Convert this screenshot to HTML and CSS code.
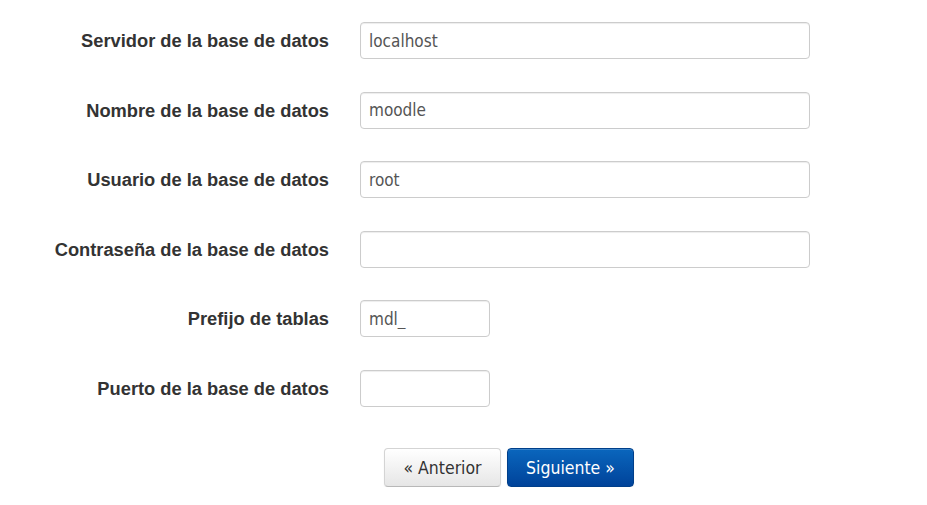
FILE: index.html
```html
<!DOCTYPE html>
<html lang="es">
<head>
<meta charset="utf-8">
<title>Configuración de la base de datos</title>
<link rel="stylesheet" href="styles.css">
</head>
<body>
<form class="form">
  <div class="row">
    <label class="label" for="dbhost">Servidor de la base de datos</label>
    <input class="field wide" id="dbhost" type="text" value="localhost">
  </div>
  <div class="row">
    <label class="label" for="dbname">Nombre de la base de datos</label>
    <input class="field wide" id="dbname" type="text" value="moodle">
  </div>
  <div class="row">
    <label class="label" for="dbuser">Usuario de la base de datos</label>
    <input class="field wide" id="dbuser" type="text" value="root">
  </div>
  <div class="row">
    <label class="label" for="dbpass">Contraseña de la base de datos</label>
    <input class="field wide" id="dbpass" type="text" value="">
  </div>
  <div class="row">
    <label class="label" for="prefix">Prefijo de tablas</label>
    <input class="field narrow" id="prefix" type="text" value="mdl_">
  </div>
  <div class="row">
    <label class="label" for="dbport">Puerto de la base de datos</label>
    <input class="field narrow" id="dbport" type="text" value="">
  </div>
  <div class="buttons">
    <button type="button" class="btn btn-prev">« Anterior</button>
    <button type="button" class="btn btn-next">Siguiente »</button>
  </div>
</form>
</body>
</html>
```
FILE: styles.css
```css
html, body {
  margin: 0;
  padding: 0;
  background: #fff;
}
.form {
  display: flex;
  flex-direction: column;
  gap: 32.5px;
  padding-top: 22px;
}
.row {
  display: flex;
  align-items: center;
  height: 37px;
}
.label {
  width: 329px;
  flex: 0 0 329px;
  text-align: right;
  font-family: "Liberation Sans", Arial, sans-serif;
  font-weight: bold;
  font-size: 18.3px;
  color: #333;
  margin-right: 31px;
  padding-top: 1px;
}
.field {
  box-sizing: border-box;
  height: 37px;
  border: 1px solid #ccc;
  border-radius: 4px;
  box-shadow: inset 0 1px 1px rgba(0,0,0,0.075);
  padding: 0 8px;
  font-family: "DejaVu Sans Condensed", "DejaVu Sans", sans-serif;
  font-stretch: condensed;
  font-size: 17px;
  color: #555;
  background: #fff;
  outline: none;
}
.wide { width: 450px; }
.narrow { width: 130px; }
.buttons {
  display: flex;
  gap: 6px;
  padding-left: 384px;
  margin-top: 8.5px;
}
.btn {
  box-sizing: border-box;
  height: 39px;
  border-radius: 4px;
  font-family: "DejaVu Sans Condensed", "DejaVu Sans", sans-serif;
  font-stretch: condensed;
  font-size: 17.5px;
  padding: 2px 0 0;
  cursor: pointer;
}
.btn-prev {
  width: 117px;
  color: #333;
  border: 1px solid #d4d4d4;
  border-bottom-color: #b8b8b8;
  background: linear-gradient(#ffffff, #e6e6e6);
  box-shadow: inset 0 1px 0 rgba(255,255,255,0.2), 0 1px 2px rgba(0,0,0,0.05);
}
.btn-next {
  width: 127px;
  color: #fff;
  border: 1px solid #003f8a;
  background: linear-gradient(#0a66bd, #00439a);
  box-shadow: inset 0 1px 0 rgba(255,255,255,0.2), 0 1px 2px rgba(0,0,0,0.05);
}
```
